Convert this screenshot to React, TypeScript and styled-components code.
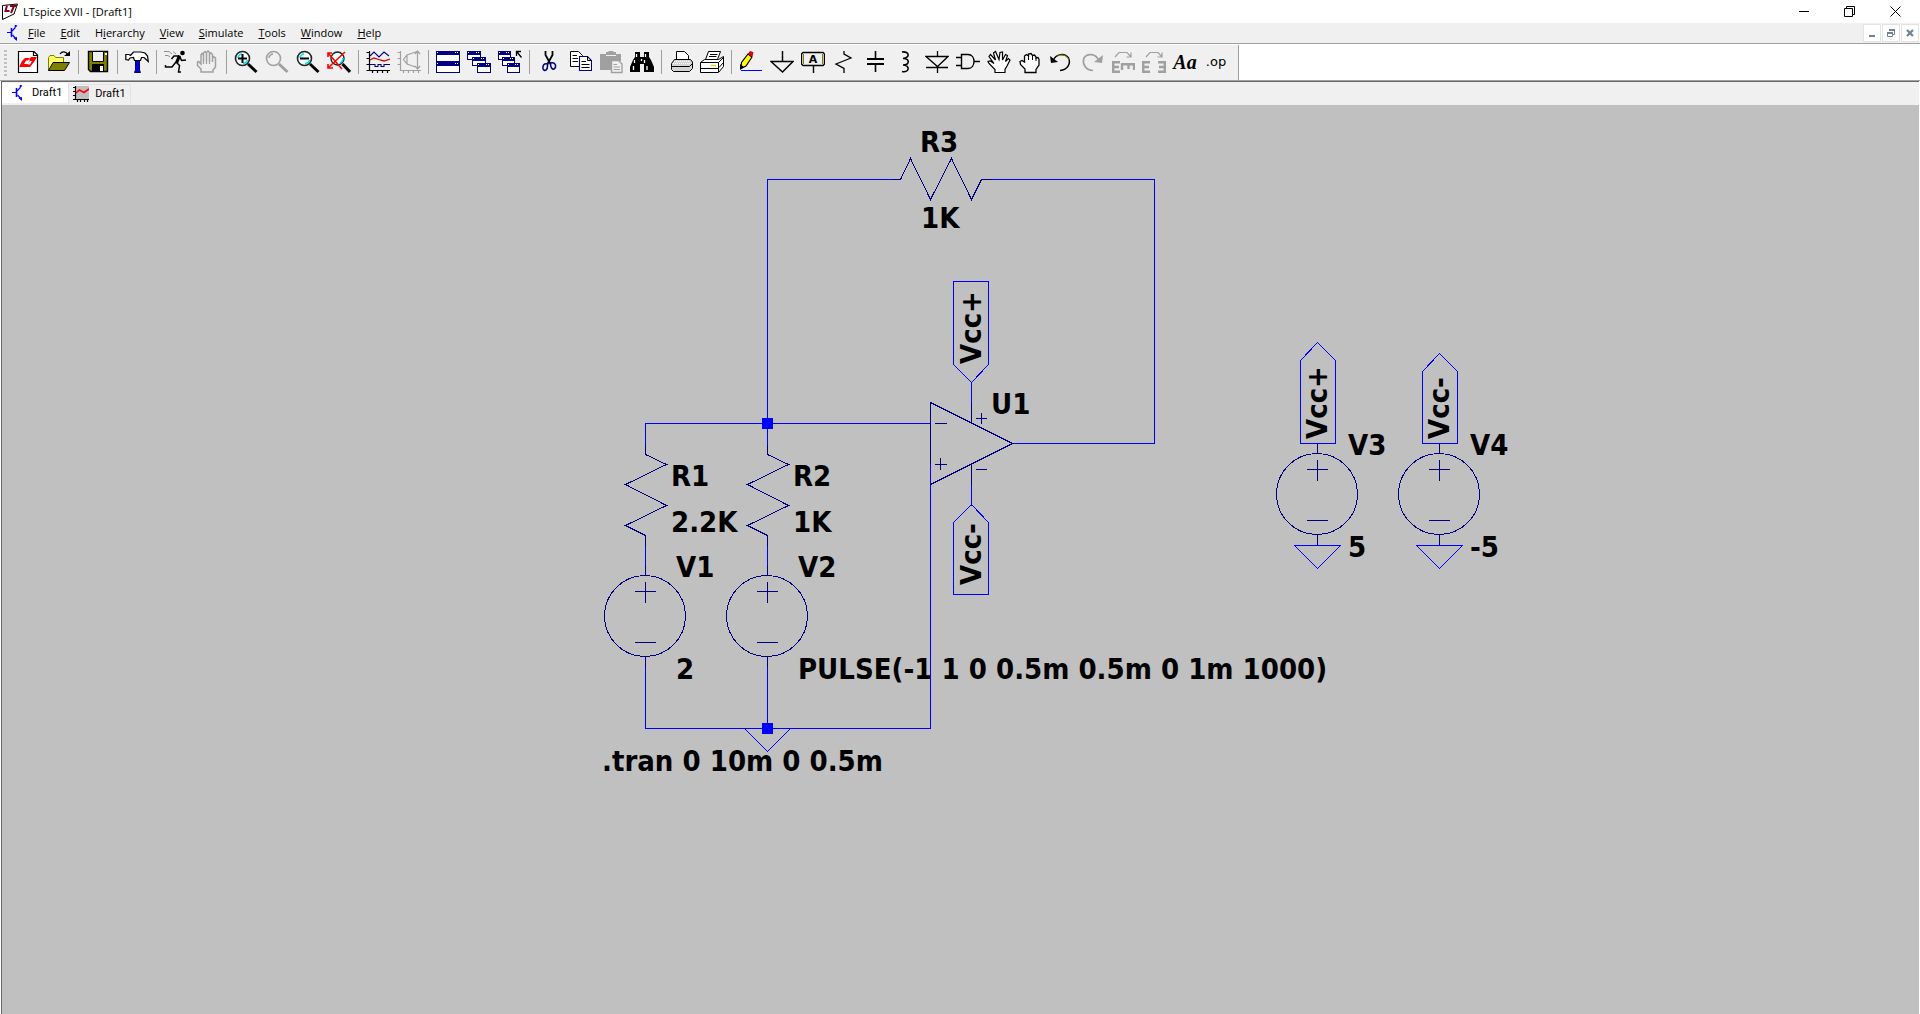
import React from "react";
import styled, { createGlobalStyle } from "styled-components";

const color = {
  face: "#f0f0f0",
  white: "#ffffff",
  shadow: "#a0a0a0",
  darkShadow: "#696969",
  light: "#e3e3e3",
  canvas: "#c0c0c0",
  wire: "#0000ff",
  symbol: "#000080",
  disabled: "#a0a0a0",
  mdi: "#6f8296",
};

const uiFont = `"Open Sans", "Noto Sans", sans-serif`;

const GlobalStyle = createGlobalStyle`
  *, *::before, *::after { box-sizing: border-box; }
  body { margin: 0; background: ${color.white}; font: 11px/16px ${uiFont}; color: #000; }
  button { font: inherit; color: inherit; border: 0; padding: 0; margin: 0; background: none; }
  svg { display: block; }
`;

const Window = styled.div`
  display: flex;
  flex-direction: column;
  min-height: 100vh;
`;

const TitleBar = styled.header`
  display: flex;
  align-items: center;
  height: 23px;
  padding: 0 2px;
  background: ${color.white};
`;

const Title = styled.h1`
  flex: 1;
  margin: 0 0 0 5px;
  font-size: 11px;
  font-weight: 400;
`;

const CaptionButton = styled.button`
  display: grid;
  place-items: center;
  width: 46px;
  height: 21px;
`;

const MenuBar = styled.nav`
  display: flex;
  align-items: center;
  height: 21px;
  padding-left: 5px;
  background: ${color.face};
  border-bottom: 1px solid ${color.shadow};
`;

const MenuItems = styled.ul`
  display: flex;
  flex: 1;
  margin: 0;
  padding: 0;
  list-style: none;
`;

const MenuButton = styled.button`
  padding: 0 8px 0 7px;
  line-height: 18px;
`;

const MdiControls = styled.div`
  display: flex;
  gap: 1px;
  padding-right: 1px;
  background: ${color.white};
`;

const MdiButton = styled.button`
  display: grid;
  place-items: center;
  width: 18px;
  height: 18px;
  background: ${color.white};
  border: 1px solid ${color.light};
`;

const ToolRow = styled.div`
  display: flex;
  background: ${color.white};
  border-top: 1px solid ${color.white};
  border-bottom: 1px solid ${color.shadow};
`;

const ToolBar = styled.div`
  display: flex;
  align-items: flex-start;
  height: 35px;
  padding: 5px 6px 0 4px;
  background: ${color.face};
  border-right: 1px solid ${color.shadow};
`;

const Grip = styled.span`
  width: 3px;
  height: 26px;
  margin-right: 6px;
  background: repeating-linear-gradient(${color.canvas} 0 2px, transparent 2px 4px);
`;

const ToolButton = styled.button`
  display: flex;
  align-items: center;
  width: 31px;
  height: 24px;
  padding-left: 3px;
`;

const Separator = styled.span`
  width: 1px;
  height: 24px;
  margin: 0 4px 0 3px;
  background: ${color.shadow};
`;

const TextGlyph = styled.span<{ $serif?: boolean }>`
  width: 24px;
  text-align: center;
  white-space: nowrap;
  font: ${(p) =>
    p.$serif
      ? `italic 700 20px/24px "Liberation Serif", serif`
      : `400 13px/24px "DejaVu Sans", sans-serif`};
`;

const Workspace = styled.main`
  display: flex;
  flex: 1;
  flex-direction: column;
  border: solid ${color.darkShadow};
  border-width: 1px 0 0 1px;
  margin-left: 1px;
  margin-right: 1px;
`;

const TabStrip = styled.div`
  display: flex;
  align-items: flex-start;
  height: 23px;
  padding-top: 1px;
  background: ${color.face};
`;

const Tab = styled.button<{ $active?: boolean }>`
  display: flex;
  align-items: center;
  gap: 6px;
  height: ${(p) => (p.$active ? 20 : 19)}px;
  margin-top: ${(p) => (p.$active ? 0 : 1)}px;
  padding: ${(p) => (p.$active ? "0 6px 0 8px" : "0 4px")};
  font: 11px/16px Roboto, ${uiFont};
  background: ${(p) => (p.$active ? color.white : color.face)};
  border: solid ${color.light};
  border-width: ${(p) => (p.$active ? "0 1px 0 0" : "1px 1px 0 0")};
`;

const Canvas = styled.section`
  flex: 1;
  display: flex;
  background: ${color.canvas};
`;

const Sheet = styled.svg`
  flex: 1;
  min-height: 700px;
`;

const Wire = styled.path`
  fill: none;
  stroke: ${color.wire};
  shape-rendering: crispEdges;
`;

const Symbol = styled.path`
  fill: none;
  stroke: ${color.symbol};
  shape-rendering: crispEdges;
`;

const Junction = styled.rect`
  fill: ${color.wire};
`;

const Label = styled.text`
  font: 700 29px "DejaVu Sans Condensed", "DejaVu Sans", sans-serif;
  fill: #000;
`;

/* ---------- toolbar icons, each on a 24 x 24 grid ---------- */

const IconSvg = styled.svg`
  width: 24px;
  height: 24px;
  fill: none;
  stroke: #000;
`;

const Icon = ({ children }: { children: React.ReactNode }) => (
  <IconSvg viewBox="0 0 24 24" aria-hidden="true">
    {children}
  </IconSvg>
);

const NewIcon = () => (
  <Icon>
    <path fill="#fff" strokeWidth="1.2" d="M2.5 1.5H18L21.5 5V22.5H2.5Z" />
    <path strokeWidth="1.2" d="M17.5 1.5V5.5H21.5" />
    <path
      fill="#f00"
      stroke="none"
      d="M9 8H14L12 10.5H10L8 14H12L10 17H3L6 11ZM12 13L14 10H13L15 7H21L18 12L14 17H9L11 14.5H14L16 11H14Z"
    />
  </Icon>
);

const OpenIcon = () => (
  <Icon>
    <path fill="#ffff66" stroke="#808000" d="M1.5 20.5V7.5L3 5.5H7L8.5 7.5H16.5V12" />
    <path fill="#808000" d="M1.5 20.5L6 12.5H22.5L17.5 20.5Z" />
    <path strokeWidth="1.3" d="M13 4C15 1 19 1 21 5" />
    <path fill="#000" stroke="none" d="M17 6H23V1Z" />
  </Icon>
);

const SaveIcon = () => (
  <Icon>
    <path fill="#808000" strokeWidth="1.4" d="M2.5 1.5H21.5V21.5H4.5L2.5 19.5Z" />
    <path fill="#f0f0f0" strokeWidth="1" d="M6.5 1.5H17.5V11.5H6.5Z" />
    <path fill="#000" stroke="none" d="M6 14H18V22H6Z" />
    <path fill="#fff" stroke="none" d="M14 16H17V21H14ZM19 3H21V5H19Z" />
  </Icon>
);

const HammerIcon = () => (
  <Icon>
    <path fill="#0000d8" stroke="#000080" d="M10.5 9V20L9.5 22.5H15.5L14.5 20V9Z" />
    <path
      fill="#fff"
      strokeWidth="1.2"
      d="M.8 9.5V4.5H4L5.5 5.5L8.5 2H16L20 3L22.5 6L23.3 11.5L19 7.5H16.5L15.5 10.5H9.5L8.5 7.5L5 8L3.5 10Z"
    />
  </Icon>
);

const RunIcon = () => (
  <Icon>
    <circle cx="18.5" cy="3" r="2.3" fill="#000" stroke="none" />
    <path strokeWidth="3.2" d="M15.5 5.5L12.5 13" />
    <path strokeWidth="1.5" d="M15 6L10 6L7.5 9M16 7L17.5 10.5L22 10M12.5 12.5L15.5 15.5L14.5 22H17M12 12L8 17H1.5V15" />
    <path stroke="#909090" d="M0 1.5H5L8 4M1 5.5L4 5.5L6 7M9 1.5L12 4" />
  </Icon>
);

const StopIcon = () => (
  <Icon>
    <path
      stroke={color.disabled}
      strokeWidth="1.5"
      d="M6 22V19L2.5 15.5V12L3.5 11.5L6 14V5L7 3.5L8.5 5V11V3L10 1.5L11.5 3V11V2.5L13 1L14.5 2.5V11V4L16 3L17.5 4.5V12V8L19 7L20.5 8V17L18 20V22Z"
    />
    <path stroke={color.disabled} strokeWidth="1.2" d="M8.5 10V14M11.5 10V14M14.5 10V14" />
  </Icon>
);

const Magnifier = ({ off, children }: { off?: boolean; children?: React.ReactNode }) => (
  <Icon>
    <circle cx="8.5" cy="8.5" r="7" fill={off ? "none" : "#f4ffff"} stroke={off ? color.disabled : "#222"} strokeWidth="1.6" />
    <path stroke={off ? color.disabled : "#00e0e8"} strokeWidth="1.5" d="M4 8C4 6 6 4 8 4" />
    {!off && <path stroke="#00e0e8" strokeWidth="1.5" d="M9 13.5C11 13.5 13 12 13.5 10" />}
    <path stroke={off ? color.disabled : "#000"} strokeWidth="3" d="M14 14L22.5 22" />
    {children}
  </Icon>
);

const ZoomInIcon = () => (
  <Magnifier>
    <path strokeWidth="2" d="M4 8.5H13M8.5 4V13" />
  </Magnifier>
);
const ZoomOutIcon = () => (
  <Magnifier>
    <path strokeWidth="2" d="M4 8.5H13" />
  </Magnifier>
);
const ZoomPanIcon = () => <Magnifier off />;
const ZoomFitIcon = () => (
  <Icon>
    <circle cx="10.5" cy="8.5" r="6.5" fill="#e8ffff" stroke="#222" strokeWidth="1.4" />
    <path stroke="#00e0e8" strokeWidth="1.6" d="M13 13C15 12 16 10 16 8" />
    <path strokeWidth="3" d="M15.5 14L23 22" />
    <path stroke="#f00" strokeWidth="1.6" d="M1 3L15 19M18 2L1 18M1 14V18H6M1 7V3H5" />
  </Icon>
);

const PlotIcon = () => (
  <Icon>
    <path strokeWidth="1.2" d="M3.5 1V20.5H24M0.5 2.5H3M0.5 8.5H3M0.5 14.5H3M3 20.5H0.5M6.5 21V23M11.5 21V23M16.5 21V23M21.5 21V23" />
    <path stroke="#000080" strokeWidth="1.1" d="M4 6L8 2L13 7L18 2L23 6" />
    <path stroke="#e00000" strokeWidth="1.3" d="M4 10L8 8L14 10L18 11L24 9" />
    <path stroke="#000080" strokeWidth="1.1" d="M4 14.5H9V16.5H12V14.5H15V16.5H18V14.5H24" />
  </Icon>
);

const FftIcon = () => (
  <Icon>
    <path stroke={color.disabled} strokeWidth="1.2" d="M3.5 1V20.5H24M0.5 2.5H3M0.5 8.5H3M0.5 14.5H3M6.5 21V23M11.5 21V23M16.5 21V23M21.5 21V23" />
    <path stroke={color.disabled} strokeWidth="1.2" d="M20 1.5L10 5L6.5 9.5L10 14L20 17.5M20.5 1V19M18 4L20.5 1L23 4M18 16L20.5 19L23 16M10 5V14" />
  </Icon>
);

const MiniWindow = ({ x, y, w, h }: { x: number; y: number; w: number; h: number }) => (
  <>
    <rect x={x + 0.5} y={y + 0.5} width={w - 1} height={h - 1} fill="#fff" stroke="#000080" />
    <rect x={x} y={y} width={w} height="4" fill="#000080" stroke="none" />
    <path stroke="#fff" d={`M${x + 1} ${y + 1.5}h1M${x + w - 5} ${y + 1.5}h1M${x + w - 3} ${y + 1.5}h1`} />
  </>
);

const TileIcon = () => (
  <Icon>
    <MiniWindow x={0} y={1} w={24} h={11} />
    <MiniWindow x={0} y={12} w={24} h={11} />
  </Icon>
);
const CascadeIcon = () => (
  <Icon>
    <MiniWindow x={0} y={1} w={14} h={9} />
    <MiniWindow x={5} y={7} w={14} h={9} />
    <MiniWindow x={10} y={13} w={14} h={10} />
  </Icon>
);
const CloseAllIcon = () => (
  <Icon>
    <MiniWindow x={0} y={1} w={13} h={9} />
    <MiniWindow x={4} y={7} w={13} h={9} />
    <MiniWindow x={9} y={13} w={13} h={10} />
    <path strokeWidth="1.3" d="M19 2L23.5 7.5M18.5 6V1.5H23" />
  </Icon>
);

const CutIcon = () => (
  <Icon>
    <path strokeWidth="1.8" d="M8.5 1V5L13.5 14M15.5 1V5L10.5 14" />
    <path stroke="#000080" strokeWidth="1.6" d="M10.5 14C7 13 5.5 15.5 6 18.5C7 22 11 21 10.5 14ZM13.5 13C17 12 19 14 18.5 17C17.5 20.5 13.5 20 13.5 13Z" />
  </Icon>
);

const CopyIcon = () => (
  <Icon>
    <path fill="#fff" d="M2.5 1.5H10.5L14.5 5.5V16.5H2.5Z" />
    <path d="M4.5 5.5H9M4.5 8.5H10M4.5 11.5H10" />
    <path fill="#fff" stroke="#000080" strokeWidth="1.1" d="M11.5 6.5H19.5L23.5 10.5V20.5H11.5Z" />
    <path stroke="#000" d="M19.5 6.5V10.5H23.5M13.5 11.5H18M13.5 14.5H21.5M13.5 17.5H21.5" />
  </Icon>
);

const PasteIcon = () => (
  <Icon>
    <path fill={color.disabled} stroke="none" d="M1 4H7V2H9L10 1H14L15 2H17V4H22V11H13V20H1Z" />
    <path stroke="#f0f0f0" d="M7 5.5H17" />
    <path fill="#f0f0f0" stroke={color.disabled} strokeWidth="1.4" d="M12.5 10.5H19.5L23 14V22.5H12.5Z" />
    <path stroke={color.disabled} d="M14.5 14.5H18M14.5 17H21M14.5 19.5H21" />
  </Icon>
);

const FindIcon = () => (
  <Icon>
    <path fill="#000" stroke="none" d="M5 2H10V7H14V2H19V7L21 10L24 17V22H14V14H10V22H0V17L3 10L5 7Z" />
    <path stroke="#fff" strokeWidth="1.3" d="M6.5 4V7M15.5 4V7M4.5 10V13M14.5 10V13M3.5 16V20M17 16V20M11.5 9V11" />
  </Icon>
);

const PrintIcon = () => (
  <Icon>
    <path fill="#fff" d="M7.5 10V1.5H15.5L19.5 5.5V10" />
    <path fill="#d4d4d4" d="M2.5 13.5L5.5 9.5H21.5L23.5 12V18.5L20.5 21.5H4.5L2.5 19.5Z" />
    <path stroke="#fff" d="M5 11.5H21M4 13.5H22" strokeDasharray="1 1" />
    <path d="M2.5 16.5H20.5L23.5 13.5" />
  </Icon>
);

const PrintSetupIcon = () => (
  <Icon>
    <path fill="#fff" d="M5.5 9.5L8.5 1.5H20.5L17.5 9.5" />
    <path d="M10 4.5H17.5M9 6.5H16.5" />
    <path fill="#fff" d="M.5 12.5L4.5 9.5H18.5L23.5 6.5V16.5L18.5 22.5H.5Z" />
    <path d="M.5 12.5H18.5V22M18.5 12.5L23.5 7.5M1 18.5H18.5M19 17.5L23.5 12.5" />
    <path stroke="#d8d800" strokeWidth="1.4" d="M11 15.5H16" />
  </Icon>
);

const PencilIcon = () => (
  <Icon>
    <path fill="#ffff00" strokeWidth="1.2" d="M9 4L13 7L7 16L2 18.5L2.5 12.5Z" />
    <path fill="#000" stroke="none" d="M1 14L5 17L1 20Z" />
    <path fill="#f00" stroke="#c00000" d="M9.5 4L11 1.5L14 2.5L13 6Z" />
    <path stroke="#0000ff" d="M2 20.5H23" />
  </Icon>
);

const GroundIcon = () => (
  <Icon>
    <path strokeWidth="1.5" d="M12.5 1V11.5M1 11.5H23L12.5 22Z" />
  </Icon>
);

const NetLabelIcon = () => (
  <Icon>
    <path strokeWidth="1.4" d="M12.5 16V23M2 2.5H22L23.5 4V14L22 15.5H2L.5 14V4Z" />
    <path stroke="#808000" d="M2.5 4V14M21.5 4V14" />
    <text x="12" y="13" textAnchor="middle" stroke="none" fill="#000" fontFamily="DejaVu Sans" fontWeight="700" fontSize="11">
      A
    </text>
  </Icon>
);

const ResistorIcon = () => (
  <Icon>
    <path strokeWidth="1.3" d="M12 1V4L19 8L4 14L12 18.5V23" />
  </Icon>
);
const CapacitorIcon = () => (
  <Icon>
    <path strokeWidth="1.6" d="M12.5 1V9.5M12.5 14.5V22" />
    <path strokeWidth="2" d="M4 9H21M4 14H21" />
  </Icon>
);
const InductorIcon = () => (
  <Icon>
    <path strokeWidth="1.6" d="M8 2C16 1 16 8 9 8.5C16 8 16 15 9 15C16 15 16 23 8 21.5" />
  </Icon>
);
const DiodeIcon = () => (
  <Icon>
    <path strokeWidth="1.3" d="M12.5 1V6M1 6.5H23L12.5 16.5ZM1 17.5H23M12.5 17V23" />
  </Icon>
);
const GateIcon = () => (
  <Icon>
    <path strokeWidth="1.4" d="M5.5 4.5H12C20 4.5 20 18.5 12 18.5H5.5ZM0 7.5H5M0 15.5H5M18 11.5H24" />
  </Icon>
);
const MoveIcon = () => (
  <Icon>
    <path
      fill="#fff"
      strokeWidth="1.2"
      d="M8 22.5V19.5L2 13.5L1 11.5L3.5 11L7 13.5L2 6.5L3.5 4.5L8.5 10L6.5 3L8.5 1.5L12 9.5L13 2.5L15.5 2L15.5 10L18.5 4.5L20.5 5.5L18.5 11.5L21.5 8.5L23 10L20 16L18 19.5V22.5Z"
    />
  </Icon>
);
const DragIcon = () => (
  <Icon>
    <path
      fill="#fff"
      strokeWidth="1.3"
      d="M7 22.5V19L2.5 14.5L2 11.5L4 10.5L6.5 12V6L8.5 4.5L10.5 6V4L13 3.5L14.5 5.5L16.5 5L18 7V8L20 7.5L21 9.5V15L18 19.5V22.5Z"
    />
    <path d="M10.5 6V10M14.5 6V10M18 8V11" />
  </Icon>
);
const UndoIcon = () => (
  <Icon>
    <path strokeWidth="1.5" d="M4 11C7 3 16 3 19.5 8C22 13 19 20 11 20.5" />
    <path stroke="#808000" d="M8 6.5C12 3.5 18 5 20 10" />
    <path fill="#000" stroke="none" d="M1 6L2 13L9 12Z" />
  </Icon>
);
const RedoIcon = () => (
  <Icon>
    <path stroke={color.disabled} strokeWidth="1.7" d="M19 11C16 3 7 3 4 8C2 13 5 20 13 20.5" />
    <path fill={color.disabled} stroke="none" d="M23 5L22 13L14 12Z" />
  </Icon>
);
const RotateIcon = () => (
  <Icon>
    <g stroke={color.disabled}>
      <path strokeWidth="1.2" d="M4 7L8 2.5H16L20 7M20 2.5V7H15.5" />
      <path strokeWidth="2.4" d="M9 12.2H2.2V21.8H9M2 17H8M24 14.2H11V20M17.5 14V19M23 14V20" />
    </g>
  </Icon>
);
const MirrorIcon = () => (
  <Icon>
    <g stroke={color.disabled}>
      <path strokeWidth="1.2" d="M4 7L8 2.5H16L20 7M20 2.5V7H15.5" />
      <path strokeWidth="2.4" d="M8 12.2H1.2V21.8H8M1 17H7M16 12.2H22.8V21.8H16M23 17H17" />
    </g>
  </Icon>
);

/* ---------- small icons of the title bar, menu bar and tabs ---------- */

const AppIcon = () => (
  <svg width="16" height="18" viewBox="0 0 16 18" aria-hidden="true">
    <path fill="#fff" stroke="#000" d="M.5 2.5L15.5 1L12 11L.5 16.5Z" />
    <path stroke="#900018" strokeWidth="2" fill="none" d="M5 2.5L3.5 8H7.5M8 3H15M12 3L9 10" />
  </svg>
);

const TransistorIcon = () => (
  <svg width="16" height="18" viewBox="0 0 16 18" aria-hidden="true">
    <path fill="none" stroke="#0000ff" strokeWidth="1.2" d="M2 8.5H6M10.5 1L10 4L7 7M7.5 11L11 15M12 1.5L10 3" />
    <path fill="none" stroke="#0000ff" strokeWidth="1.6" d="M6.5 4V13" />
    <path fill="#0000ff" d="M8.5 14L12 13V17Z" />
  </svg>
);

const WaveIcon = () => (
  <svg width="16" height="18" viewBox="0 0 16 18" aria-hidden="true">
    <path fill="#c0c0c0" d="M3 1H16V14H3Z" />
    <path fill="none" stroke="#000" strokeWidth="1.2" d="M2.5 1V14.5H16M0 2.5H2M0 6.5H2M0 10.5H2M0 14.5H2M4.5 15V17M7.5 15V17M11.5 15V17M14.5 15V17" />
    <path fill="none" stroke="#f00" strokeWidth="1.6" d="M3 8L6.5 5L11 7.5L16 4" />
  </svg>
);

const MinimizeIcon = () => (
  <svg width="11" height="11" viewBox="0 0 11 11" stroke="#000" aria-hidden="true">
    <path d="M1 5.5H11" />
  </svg>
);
const RestoreIcon = () => (
  <svg width="11" height="11" viewBox="0 0 11 11" stroke="#000" fill="none" aria-hidden="true">
    <path d="M.5 2.5H8.5V10.5H.5ZM2.5 2V.5H10.5V8.5H9" />
  </svg>
);
const CloseIcon = () => (
  <svg width="11" height="11" viewBox="0 0 11 11" stroke="#000" aria-hidden="true">
    <path d="M.5 .5L10.5 10.5M10.5 .5L.5 10.5" />
  </svg>
);
const MdiMinimizeIcon = () => (
  <svg width="8" height="8" viewBox="0 0 8 8" stroke={color.mdi} aria-hidden="true">
    <path strokeWidth="2" d="M1 7H7" />
  </svg>
);
const MdiRestoreIcon = () => (
  <svg width="8" height="8" viewBox="0 0 8 8" stroke={color.mdi} fill="none" aria-hidden="true">
    <path d="M.5 4V7.5H5.5V4M2.5 2V1M7.5 1V5.5H6" />
    <path strokeWidth="2" d="M0 4H6M2 1H8" />
  </svg>
);
const MdiCloseIcon = () => (
  <svg width="8" height="8" viewBox="0 0 8 8" stroke={color.mdi} aria-hidden="true">
    <path strokeWidth="2.2" d="M1 1L7 7M7 1L1 7" />
  </svg>
);

/* ---------- schematic parts ---------- */

const Resistor = ({ x, y }: { x: number; y: number }) => (
  <Symbol d={`M${x} ${y}v10l21 10l-41 20l41 21l-41 20l20 10v10`} />
);

const Source = ({ x, y }: { x: number; y: number }) => (
  <>
    <Symbol d={`M${x - 0.5} ${y + 10}a40.5 40.5 0 0 1 0 81a40.5 40.5 0 0 1 0 -81`} />
    <Symbol
      d={`M${x} ${y}v10M${x} ${y + 91}v10M${x - 10.5} ${y + 26}h21M${x} ${y + 16}v21M${x - 10.5} ${y + 77}h21`}
    />
  </>
);

const Ground = ({ x, y }: { x: number; y: number }) => (
  <Wire d={`M${x - 23} ${y}h46l-23 23Z`} />
);

/* dir is the side the tip points to: 1 down, -1 up; left is the distance from the tip to the left side */
const Flag = ({ x, y, len, dir, left = 18 }: { x: number; y: number; len: number; dir: 1 | -1; left?: number }) => (
  <Wire d={`M${x} ${y}l${-left} ${-18 * dir}v${-len * dir}h35v${len * dir}Z`} />
);

const labels: { x: number; y: number; text: string; up?: boolean }[] = [
  { x: 920, y: 152, text: "R3" },
  { x: 921, y: 228, text: "1K" },
  { x: 991, y: 414, text: "U1" },
  { x: 671, y: 486, text: "R1" },
  { x: 671, y: 532, text: "2.2K" },
  { x: 793, y: 486, text: "R2" },
  { x: 793, y: 532, text: "1K" },
  { x: 676, y: 577, text: "V1" },
  { x: 798, y: 577, text: "V2" },
  { x: 676, y: 679, text: "2" },
  { x: 798, y: 679, text: "PULSE(-1 1 0 0.5m 0.5m 0 1m 1000)" },
  { x: 602, y: 771, text: ".tran 0 10m 0 0.5m" },
  { x: 1348, y: 455, text: "V3" },
  { x: 1470, y: 455, text: "V4" },
  { x: 1348, y: 557, text: "5" },
  { x: 1470, y: 557, text: "-5" },
  { x: 981, y: 364, text: "Vcc+", up: true },
  { x: 981, y: 585, text: "Vcc-", up: true },
  { x: 1327, y: 439, text: "Vcc+", up: true },
  { x: 1449, y: 439, text: "Vcc-", up: true },
];

const Schematic = () => (
  <Sheet role="img" aria-label="Schematic Draft1">
    <g transform="translate(-2 -105)">
      {labels.map((l, i) => (
        <Label key={i} transform={`translate(${l.x} ${l.y})${l.up ? " rotate(-90)" : ""}`}>
          {l.text}
        </Label>
      ))}
      <g transform="translate(.5 .5)">
        <Wire d="M767 423V179H891M991 179H1154V443H1012" />
        <Wire d="M645 444V423H930M767 423V444M645 545V565M767 545V565" />
        <Wire d="M645 666V728H930V463M767 666V728" />
        <Wire d="M971 382V402M971 484V505" />
        <Symbol d="M891 179H900L910 158L930 199L951 158L971 199L981 179H991" />
        <Resistor x={645} y={444} />
        <Resistor x={767} y={444} />
        <Source x={645} y={565} />
        <Source x={767} y={565} />
        <Symbol d="M930 463V402L1012 443L930 484M971 402V423M971 463V484" />
        <Symbol d="M934.5 423H946.5M934.5 464H946.5M940 457.5V469.5M975.5 418H986.5M981 412.5V423.5M975.5 469H986.5" />
        <Flag x={971} y={382} len={83} dir={1} />
        <Flag x={971} y={504} len={72} dir={-1} />
        <Flag x={1317} y={342} len={83} dir={-1} left={17} />
        <Flag x={1439} y={353} len={72} dir={-1} left={17} />
        <Source x={1317} y={443} />
        <Source x={1439} y={443} />
        <Ground x={1317} y={545} />
        <Ground x={1439} y={545} />
        <Ground x={767} y={728} />
      </g>
      <Junction x="762" y="418" width="11" height="11" />
      <Junction x="762" y="723" width="11" height="11" />
    </g>
  </Sheet>
);

/* ---------- data of the bars ---------- */

const menus: [string, string, string][] = [
  ["", "F", "ile"],
  ["", "E", "dit"],
  ["H", "i", "erarchy"],
  ["", "V", "iew"],
  ["", "S", "imulate"],
  ["", "T", "ools"],
  ["", "W", "indow"],
  ["", "H", "elp"],
];

const toolGroups: { name: string; icon: React.ReactNode; off?: boolean }[][] = [
  [
    { name: "New Schematic", icon: <NewIcon /> },
    { name: "Open", icon: <OpenIcon /> },
  ],
  [{ name: "Save", icon: <SaveIcon /> }],
  [{ name: "Control Panel", icon: <HammerIcon /> }],
  [
    { name: "Run", icon: <RunIcon /> },
    { name: "Halt", icon: <StopIcon />, off: true },
  ],
  [
    { name: "Zoom to rectangle", icon: <ZoomInIcon /> },
    { name: "Pan", icon: <ZoomPanIcon />, off: true },
    { name: "Zoom back", icon: <ZoomOutIcon /> },
    { name: "Zoom full extents", icon: <ZoomFitIcon /> },
  ],
  [
    { name: "Autorange", icon: <PlotIcon /> },
    { name: "Set log file", icon: <FftIcon />, off: true },
  ],
  [
    { name: "Tile windows", icon: <TileIcon /> },
    { name: "Cascade windows", icon: <CascadeIcon /> },
    { name: "Close all windows", icon: <CloseAllIcon /> },
  ],
  [
    { name: "Cut", icon: <CutIcon /> },
    { name: "Copy", icon: <CopyIcon /> },
    { name: "Paste", icon: <PasteIcon />, off: true },
    { name: "Find", icon: <FindIcon /> },
  ],
  [
    { name: "Print", icon: <PrintIcon /> },
    { name: "Print setup", icon: <PrintSetupIcon /> },
  ],
  [
    { name: "Wire", icon: <PencilIcon /> },
    { name: "Ground", icon: <GroundIcon /> },
    { name: "Label net", icon: <NetLabelIcon /> },
    { name: "Resistor", icon: <ResistorIcon /> },
    { name: "Capacitor", icon: <CapacitorIcon /> },
    { name: "Inductor", icon: <InductorIcon /> },
    { name: "Diode", icon: <DiodeIcon /> },
    { name: "Component", icon: <GateIcon /> },
    { name: "Move", icon: <MoveIcon /> },
    { name: "Drag", icon: <DragIcon /> },
    { name: "Undo", icon: <UndoIcon /> },
    { name: "Redo", icon: <RedoIcon />, off: true },
    { name: "Rotate", icon: <RotateIcon />, off: true },
    { name: "Mirror", icon: <MirrorIcon />, off: true },
    { name: "Text", icon: <TextGlyph $serif>Aa</TextGlyph> },
    { name: "SPICE directive", icon: <TextGlyph>.op</TextGlyph> },
  ],
];

export default function App() {
  return (
    <Window>
      <GlobalStyle />
      <TitleBar>
        <AppIcon />
        <Title>LTspice XVII - [Draft1]</Title>
        <CaptionButton aria-label="Minimize"><MinimizeIcon /></CaptionButton>
        <CaptionButton aria-label="Restore"><RestoreIcon /></CaptionButton>
        <CaptionButton aria-label="Close"><CloseIcon /></CaptionButton>
      </TitleBar>
      <MenuBar>
        <TransistorIcon />
        <MenuItems>
          {menus.map(([before, key, after]) => (
            <li key={before + key + after}>
              <MenuButton>
                {before}
                <u>{key}</u>
                {after}
              </MenuButton>
            </li>
          ))}
        </MenuItems>
        <MdiControls>
          <MdiButton aria-label="Minimize document"><MdiMinimizeIcon /></MdiButton>
          <MdiButton aria-label="Restore document"><MdiRestoreIcon /></MdiButton>
          <MdiButton aria-label="Close document"><MdiCloseIcon /></MdiButton>
        </MdiControls>
      </MenuBar>
      <ToolRow>
        <ToolBar role="toolbar" aria-label="Schematic tools">
          <Grip />
          {toolGroups.map((group, g) => (
            <React.Fragment key={g}>
              {g > 0 && <Separator />}
              {group.map((tool) => (
                <ToolButton key={tool.name} aria-label={tool.name} disabled={tool.off}>
                  {tool.icon}
                </ToolButton>
              ))}
            </React.Fragment>
          ))}
        </ToolBar>
      </ToolRow>
      <Workspace>
        <TabStrip role="tablist">
          <Tab $active role="tab" aria-selected="true">
            <TransistorIcon />
            Draft1
          </Tab>
          <Tab role="tab" aria-selected="false">
            <WaveIcon />
            Draft1
          </Tab>
        </TabStrip>
        <Canvas>
          <Schematic />
        </Canvas>
      </Workspace>
    </Window>
  );
}
